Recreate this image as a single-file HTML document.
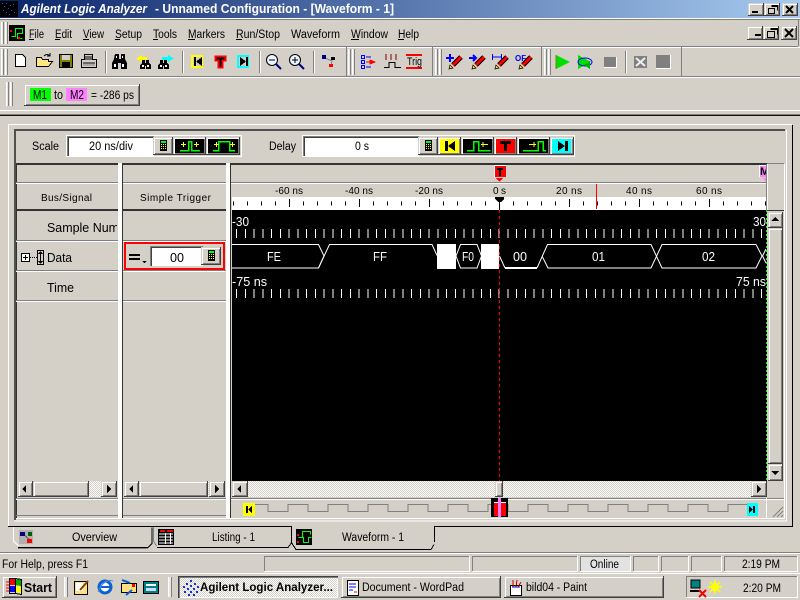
<!DOCTYPE html>
<html><head><meta charset="utf-8"><style>
html,body{margin:0;padding:0;width:800px;height:600px;overflow:hidden;background:#d4d0c8}
#p{position:absolute;left:0;top:0;width:800px;height:600px;overflow:hidden}
.r,.s,.f,.g,.g1,.b{position:absolute;box-sizing:border-box}
.b{background:#d4d0c8;box-shadow:inset -1px -1px #404040,inset 1px 1px #fff,inset -2px -2px #808080}
.r{background:#d4d0c8;box-shadow:inset -1px -1px #404040,inset 1px 1px #d4d0c8,inset 2px 2px #fff,inset -2px -2px #808080}
.s{box-shadow:inset -1px -1px #fff,inset 1px 1px #808080}
.f{background:#fff;box-shadow:inset 1px 1px #808080,inset 2px 2px #404040,inset -1px -1px #fff}
.g{width:7px;background:linear-gradient(90deg,#fff 0 1px,#e8e6e2 1px 2px,#808080 2px 3px,#d4d0c8 3px 4px,#fff 4px 5px,#e8e6e2 5px 6px,#808080 6px 7px)}
.g1{width:4px;border-left:1px solid #fff;border-right:1px solid #808080;background:#e8e6e2}
svg{position:absolute;left:0;top:0}
text{font-family:"Liberation Sans",sans-serif;font-size:11.5px;fill:#000}
.w{fill:#fff;font-size:13px}
.m{font-size:13px}
.t{font-size:10px}
</style></head><body><div id="p">
<div style="position:absolute;left:0;top:0;width:800px;height:18px;background:linear-gradient(90deg,#0a246a,#a6caf0)"></div>
<div class="r" style="left:748px;top:3px;width:16px;height:13px"></div>
<div class="r" style="left:764px;top:3px;width:16px;height:13px"></div>
<div class="r" style="left:782px;top:3px;width:16px;height:13px"></div>
<div class="r" style="left:747px;top:26px;width:16px;height:14px"></div>
<div class="r" style="left:763px;top:26px;width:16px;height:14px"></div>
<div class="r" style="left:781px;top:26px;width:16px;height:14px"></div>
<div class="g" style="left:1px;top:22px;height:22px"></div>
<div class="g" style="left:1px;top:49px;height:26px"></div>
<div class="g" style="left:348px;top:49px;height:26px"></div>
<div class="g" style="left:435px;top:49px;height:26px"></div>
<div class="g" style="left:544px;top:49px;height:26px"></div>
<div class="g" style="left:6px;top:82px;height:24px"></div>
<div class="r" style="left:24px;top:84px;width:116px;height:22px"></div>
<div style="position:absolute;left:30px;top:88px;width:21px;height:13px;background:#00ff00"></div>
<div style="position:absolute;left:66px;top:88px;width:21px;height:13px;background:#ff80ff"></div>

<div class="f" style="left:67px;top:136px;width:87px;height:20px"></div>
<div class="r" style="left:153px;top:137px;width:20px;height:18px"></div>
<div class="r" style="left:173px;top:137px;width:33px;height:18px"></div>
<div class="r" style="left:206px;top:137px;width:34px;height:18px"></div>
<div class="f" style="left:303px;top:136px;width:116px;height:20px"></div>
<div class="r" style="left:418px;top:137px;width:20px;height:18px"></div>
<div class="r" style="left:438px;top:137px;width:23px;height:18px"></div>
<div class="r" style="left:461px;top:137px;width:33px;height:18px"></div>
<div class="r" style="left:494px;top:137px;width:23px;height:18px"></div>
<div class="r" style="left:517px;top:137px;width:33px;height:18px"></div>
<div class="r" style="left:550px;top:137px;width:24px;height:18px"></div>

<div class="f" style="left:150px;top:246px;width:53px;height:20px"></div>
<div class="r" style="left:201px;top:247px;width:20px;height:18px"></div>

<div class="r" style="left:18px;top:481px;width:15px;height:16px"></div>
<div class="r" style="left:33px;top:481px;width:56px;height:16px"></div>
<div class="r" style="left:101px;top:481px;width:16px;height:16px"></div>
<div class="r" style="left:124px;top:481px;width:15px;height:16px"></div>
<div class="r" style="left:139px;top:481px;width:69px;height:16px"></div>
<div class="r" style="left:209px;top:481px;width:16px;height:16px"></div>
<div class="r" style="left:232px;top:481px;width:16px;height:16px"></div>
<div class="r" style="left:495px;top:481px;width:8px;height:16px"></div>
<div class="r" style="left:751px;top:481px;width:16px;height:16px"></div>
<div class="r" style="left:768px;top:212px;width:15px;height:16px"></div>
<div class="r" style="left:768px;top:228px;width:15px;height:236px"></div>
<div class="r" style="left:768px;top:464px;width:15px;height:17px"></div>

<div class="s" style="left:264px;top:556px;width:206px;height:16px"></div>
<div class="s" style="left:472px;top:556px;width:106px;height:16px"></div>
<div class="s" style="left:580px;top:556px;width:51px;height:16px;background:#e2e2e2"></div>
<div class="s" style="left:633px;top:556px;width:26px;height:16px"></div>
<div class="s" style="left:661px;top:556px;width:28px;height:16px"></div>
<div class="s" style="left:691px;top:556px;width:31px;height:16px"></div>
<div class="s" style="left:724px;top:556px;width:74px;height:16px"></div>

<div class="r" style="left:2px;top:576px;width:55px;height:22px"></div>
<div class="g1" style="left:64px;top:577px;height:20px"></div>
<div class="g1" style="left:168px;top:577px;height:20px"></div>
<div class="b" style="left:178px;top:576px;width:160px;height:22px;box-shadow:inset 1px 1px #404040,inset 2px 2px #808080,inset -1px -1px #fff;background:repeating-conic-gradient(#fff 0 25%,#d4d0c8 0 50%) 0 0/2px 2px"></div>
<div class="r" style="left:341px;top:576px;width:160px;height:22px"></div>
<div class="r" style="left:504px;top:576px;width:160px;height:22px"></div>
<div class="s" style="left:686px;top:576px;width:112px;height:22px"></div>

<svg width="800" height="600" viewBox="0 0 800 600" shape-rendering="crispEdges">
<defs>
<pattern id="d" width="2" height="2" patternUnits="userSpaceOnUse"><rect width="2" height="2" fill="#fff"/><rect width="1" height="1" fill="#d4d0c8"/><rect x="1" y="1" width="1" height="1" fill="#d4d0c8"/></pattern>
</defs>
<!-- title icon -->
<rect x="0" y="1" width="18" height="16" fill="#000"/>
<path d="M2 3h1v1H2zM6 3h1v1H6zM10 5h1v1h-1zM4 6h1v1H4zM13 4h1v1h-1zM8 8h1v1H8zM3 10h1v1H3zM11 10h1v1h-1zM6 12h1v1H6zM14 12h1v1h-1zM9 14h1v1H9z" fill="#2a4ae0"/>
<text x="21" y="13" font-weight="bold" font-style="italic" style="fill:#fff;font-size:13px" textLength="126" lengthAdjust="spacingAndGlyphs">Agilent Logic Analyzer</text>
<text x="155" y="13" font-weight="bold" style="fill:#fff;font-size:12.500px" textLength="239" lengthAdjust="spacingAndGlyphs">- Unnamed Configuration - [Waveform - 1]</text>
<!-- window btns -->
<path d="M752 11h6v2h-6zM755 34h6v2h-6z" fill="#000"/>
<path d="M786 6l7 7M793 6l-7 7M785 29l8 8M793 29l-8 8" stroke="#000" stroke-width="2" shape-rendering="auto"/>
<path d="M768.500 8.500h6v5h-6zM771.500 5.500h6v5M771.500 6.500h6" fill="none" stroke="#000"/>
<path d="M767.500 31.500h7v6h-7zM770.500 28.500h7v6M770.500 29.500h7" fill="none" stroke="#000"/>
<!-- chrome lines -->
<path d="M0 18.500h800" stroke="#fff"/><path d="M0 19.500h800" stroke="#808080"/>
<path d="M0 46.500h798" stroke="#808080"/><path d="M798.500 20v26" stroke="#808080"/><path d="M0 47.500h800" stroke="#fff"/>
<path d="M0 76.500h800" stroke="#808080"/><path d="M0 77.500h800" stroke="#fff"/>
<path d="M0 110.500h800" stroke="#fff"/><path d="M0 114.500h800" stroke="#808080"/><path d="M0 115.500h800" stroke="#111"/>
<path d="M346.500 47v29M432.500 47v29M541.500 47v29M681.500 47v29" stroke="#808080"/>
<path d="M105.500 51v22M182.500 51v22M259.500 51v22M313.500 51v22M625.500 51v22" stroke="#808080"/>
<path d="M106.500 51v22M183.500 51v22M260.500 51v22M314.500 51v22M626.500 51v22" stroke="#fff"/>
<!-- menu -->
<rect x="9" y="25" width="16" height="16" fill="#000"/>
<path d="M11.500 36.500h4v-8h7v5h-5v5h5" fill="none" stroke="#0f0"/>
<path d="M10 30h2v2h-2zM18 37h2v2h-2z" fill="#f00"/>
<text x="29" y="38" textLength="15" lengthAdjust="spacingAndGlyphs">File</text>
<text x="55" y="38" textLength="17" lengthAdjust="spacingAndGlyphs">Edit</text>
<text x="83" y="38" textLength="21" lengthAdjust="spacingAndGlyphs">View</text>
<text x="115" y="38" textLength="27" lengthAdjust="spacingAndGlyphs">Setup</text>
<text x="153" y="38" textLength="24" lengthAdjust="spacingAndGlyphs">Tools</text>
<text x="188" y="38" textLength="37" lengthAdjust="spacingAndGlyphs">Markers</text>
<text x="236" y="38" textLength="44" lengthAdjust="spacingAndGlyphs">Run/Stop</text>
<text x="291" y="38" textLength="49" lengthAdjust="spacingAndGlyphs">Waveform</text>
<text x="351" y="38" textLength="37" lengthAdjust="spacingAndGlyphs">Window</text>
<text x="398" y="38" textLength="21" lengthAdjust="spacingAndGlyphs">Help</text>
<path d="M29 39.500h5M55 39.500h5M83 39.500h6M115 39.500h5M153 39.500h5M188 39.500h7M236 39.500h6M351 39.500h8M398 39.500h6" stroke="#000"/>
<!-- toolbar icons -->
<path d="M15.500 54.500h7l3 3v9h-10z" fill="#fff" stroke="#000"/>
<path d="M36.500 66.500v-9h5l1 2h6v2h4l-4 5z" fill="#ffe680" stroke="#000"/><path d="M44 56q3-3 6 0M50 53v3h-3" fill="none" stroke="#000" shape-rendering="auto"/>
<rect x="59.500" y="54.500" width="13" height="13" fill="#808000" stroke="#000"/><rect x="62" y="55" width="8" height="5" fill="#d4d0c8"/><rect x="62" y="62" width="8" height="5" fill="#000"/>
<path d="M84.500 54.500h8v5h4v8h-15v-8h3z" fill="#d4d0c8" stroke="#000"/><path d="M85 57h7M85 59h7M83 63h12" stroke="#000"/><path d="M83 65h12" stroke="#808080"/>
<!-- binoculars -->
<path d="M115 54h4v5h2v-5h4v5l2 4v6h-6v-6h-3v6h-6v-6l2-4z" fill="#000"/>
<path d="M114 64h2v3h-2zM122 64h2v3h-2zM116 56h1v2h-1zM122 56h1v2h-1z" fill="#fff"/>
<path d="M135 57h5v-2l6 3.500-6 3.500v-2h-5z" transform="matrix(-1 0 0 1 282 0)" fill="#ff0"/>
<path d="M142 60h3v3h1v-3h3v3l2 2v4h-5v-3h-1v3h-5v-4l2-2z" fill="#000"/><path d="M142 65h2v2h-2zM147 65h2v2h-2z" fill="#fff"/>
<path d="M162 57h6v-2l6 3.500-6 3.500v-2h-6z" fill="#0ff"/>
<path d="M160 60h3v3h1v-3h3v3l2 2v4h-5v-3h-1v3h-5v-4l2-2z" fill="#000"/><path d="M160 65h2v2h-2zM165 65h2v2h-2z" fill="#fff"/>
<!-- K T K -->
<path d="M191 55h12v13h-12zM193 57v9h8v-9z" fill="#ff0" fill-rule="evenodd"/><path d="M194 57h2v9h-2zM196 61.500l6-4.500v9z" fill="#000"/>
<path d="M215.500 56.500h10v4h-3v7h-4v-7h-3z" fill="#000" stroke="#f00" stroke-width="2"/>
<path d="M237 55h12v13h-12zM239 57v9h8v-9z" fill="#0ff" fill-rule="evenodd"/><path d="M246 57h2v9h-2zM246 61.500l-6-4.500v9z" fill="#000"/>
<g fill="none" stroke="#000" shape-rendering="auto"><circle cx="272" cy="60" r="5.500" fill="#e8f4ff"/><path d="M269 60h6"/><circle cx="295" cy="60" r="5.500" fill="#e8f4ff"/><path d="M292 60h6M295 57v6"/></g>
<path d="M276 64l5 5M299 64l5 5" stroke="#000080" stroke-width="2" shape-rendering="auto"/>
<path d="M325 58l7 3-1 5" stroke="#808080" fill="none"/><rect x="322" y="55" width="4" height="4" fill="#000080"/><rect x="331" y="57" width="4" height="3" fill="#000"/><rect x="329" y="64" width="4" height="3" fill="#f00"/>
<g fill="none" stroke="#0000ff"><path d="M361.500 55.500h3v3h-3zM361.500 60.500h3v3h-3zM361.500 65.500h3v3h-3z"/><path d="M366 57h5M366 67h5"/></g><path d="M366 62h4v-2l5 2-5 2v-2" fill="#f00" stroke="#f00"/>
<path d="M386 54v6M391 54v6M396 54v6" stroke="#800000"/><path d="M384 67.500h5v-5h6v5h6" fill="none" stroke="#000"/>
<path d="M406 54h16v2h-16zM406 67h16v2h-16z" fill="#f00"/>
<text x="407" y="65" textLength="15" lengthAdjust="spacingAndGlyphs" style="font-size:11px">Trig</text>
<g shape-rendering="auto">
<g id="pen"><path d="M453 65l8-8" stroke="#000" stroke-width="5"/><path d="M453 65l8-8" stroke="#f00" stroke-width="3"/><path d="M449 69l1-4 3 3z" fill="#ffe000" stroke="#000" stroke-width=".7"/></g>
<path d="M476 65l8-8" stroke="#000" stroke-width="5"/><path d="M476 65l8-8" stroke="#f00" stroke-width="3"/><path d="M472 69l1-4 3 3z" fill="#ffe000" stroke="#000" stroke-width=".7"/>
<path d="M499 65l8-8" stroke="#000" stroke-width="5"/><path d="M499 65l8-8" stroke="#f00" stroke-width="3"/><path d="M495 69l1-4 3 3z" fill="#ffe000" stroke="#000" stroke-width=".7"/>
<path d="M523 65l8-8" stroke="#000" stroke-width="5"/><path d="M523 65l8-8" stroke="#f00" stroke-width="3"/><path d="M519 69l1-4 3 3z" fill="#ffe000" stroke="#000" stroke-width=".7"/>
<path d="M446 58h8M450 54v8M469 58h7M473 55l3 3-3 3" fill="none" stroke="#00f" stroke-width="2"/>
<path d="M492.500 54v6M501.500 54v6M492 57h9" fill="none" stroke="#00f"/>
</g>
<text x="515" y="61" style="font-size:8px;fill:#00f;font-weight:bold">OF</text>
<path d="M556 55l14 7-14 7z" fill="#00e000"/><path d="M556 55v14" stroke="#808000"/>
<path d="M578 55l13 7-13 7z" fill="#00e000"/><ellipse cx="585" cy="62" rx="7" ry="4" fill="none" stroke="#00f" shape-rendering="auto"/><path d="M590 61v8l-6-4z" fill="#00b000"/>
<rect x="604" y="57" width="12" height="11" fill="#808080"/><path d="M604 67.500h12M616.500 57v11" stroke="#fff"/>
<rect x="634" y="56" width="13" height="12" fill="#808080"/><path d="M636 58l9 8M645 58l-9 8" stroke="#eee" stroke-width="2" shape-rendering="auto"/>
<rect x="656" y="55" width="15" height="14" fill="#808080"/><path d="M656 68.500h15M670.500 55v14" stroke="#fff"/>
<!-- toolbar 3 -->
<text x="33" y="99" textLength="14" lengthAdjust="spacingAndGlyphs" class="m">M1</text>
<text x="54" y="99" textLength="9" lengthAdjust="spacingAndGlyphs" class="m">to</text>
<text x="70" y="99" textLength="14" lengthAdjust="spacingAndGlyphs" class="m">M2</text>
<text x="91" y="99" textLength="43" lengthAdjust="spacingAndGlyphs">= -286 ps</text>

<!-- MDI frame -->
<path d="M8 124.500h784M8.500 124v402" stroke="#fff"/>
<path d="M14 129.500h771M14 130.500h771" stroke="#505050"/><path d="M14.500 130v390M15.500 130v390" stroke="#505050"/>
<path d="M786.500 130v391H14" fill="none" stroke="#fff"/>
<path d="M784.500 164v354.500H16" fill="none" stroke="#fff"/>
<path d="M66.500 135.500h175v21h-175zM302.500 135.500h272v21h-272z" fill="none" stroke="#fff"/>
<text x="32" y="150" textLength="27" lengthAdjust="spacingAndGlyphs">Scale</text>
<text x="89" y="150" textLength="44" lengthAdjust="spacingAndGlyphs">20 ns/div</text>
<text x="269" y="150" textLength="27" lengthAdjust="spacingAndGlyphs">Delay</text>
<text x="355" y="150" textLength="14" lengthAdjust="spacingAndGlyphs">0 s</text>
<!-- calc -->
<rect x="160" y="140" width="7" height="11" fill="#000"/><rect x="161" y="141" width="5" height="2" fill="#0f0"/><path d="M161 144.500h5M161 146.500h5M161 148.500h5" stroke="#ff0" stroke-dasharray="1 1"/>
<rect x="425" y="140" width="7" height="11" fill="#000"/><rect x="426" y="141" width="5" height="2" fill="#0f0"/><path d="M426 144.500h5M426 146.500h5M426 148.500h5" stroke="#ff0" stroke-dasharray="1 1"/>
<rect x="208" y="250" width="7" height="11" fill="#000"/><rect x="209" y="251" width="5" height="2" fill="#0f0"/><path d="M209 254.500h5M209 256.500h5M209 258.500h5" stroke="#ff0" stroke-dasharray="1 1"/>
<!-- pulse buttons -->
<rect x="175" y="139" width="29" height="14" fill="#000"/><path d="M180 150.500h8.500v-9h3v9h8.500" fill="none" stroke="#0f0" stroke-width="1.500"/><path d="M181 144.500h5M183.500 142v5M194 144.500h5M196.500 142v5" stroke="#ff0"/>
<rect x="208" y="139" width="30" height="14" fill="#000"/><path d="M213 150.500h5.500v-9h11v9h5.500" fill="none" stroke="#0f0" stroke-width="1.500"/><path d="M214 144.500h5M216.500 142v5M230 144.500h5M232.500 142v5" stroke="#ff0"/>
<rect x="440" y="139" width="19" height="14" fill="#ff0"/><path d="M445 141h3v10h-3zM448 146l7-5v10z" fill="#000"/>
<rect x="463" y="139" width="29" height="14" fill="#000"/><path d="M467 150.500h6.500v-9h5v9h12" fill="none" stroke="#0f0" stroke-width="1.500"/><path d="M481 144.500h7M483 142v5" stroke="#ff0"/>
<rect x="496" y="139" width="19" height="14" fill="#f00"/><path d="M500 141h11v3h-4v7h-3v-7h-4z" fill="#000"/>
<rect x="519" y="139" width="29" height="14" fill="#000"/><path d="M523 150.500h15v-9h5v9h3" fill="none" stroke="#0f0" stroke-width="1.500"/><path d="M529 144.500h7M534 142v5" stroke="#ff0"/>
<rect x="552" y="139" width="19" height="14" fill="#0ff"/><path d="M565 141h3v10h-3zM565 146l-7-5v10z" fill="#000"/>

<!-- panels -->
<path d="M118 163h4v355h-4zM226 163h4v355h-4z" fill="#fff"/>
<path d="M16 163.500h102M123 163.500h103M231 163.500h536M16 164.500h102M123 164.500h103M231 164.500h536" stroke="#333"/><path d="M767 163.500h17" stroke="#808080"/>
<path d="M122.500 163v355M230.500 163v355" stroke="#333"/>
<path d="M16.500 163v355" stroke="#333"/>
<path d="M16 182.500h102M123 182.500h103M231 182.500h535" stroke="#808080"/><path d="M16 183.500h102M123 183.500h103M231 183.500h535" stroke="#fff"/>
<path d="M16 210.500h102M123 210.500h103M16 209.500h102M123 209.500h103" stroke="#333"/><path d="M767 210.500h17" stroke="#333"/>
<path d="M16 240.500h102M123 240.500h103M16 270.500h102M123 270.500h103M16 300.500h102M123 300.500h103M16 498.500h102M123 498.500h103M231 498.500h553" stroke="#808080"/>
<path d="M16 241.500h102M123 241.500h103M16 271.500h102M123 271.500h103M16 301.500h102M123 301.500h103M16 499.500h102M123 499.500h103M231 499.500h553" stroke="#fff"/>
<path d="M16 515.500h102M123 515.500h103" stroke="#808080"/>
<path d="M766.500 164v46" stroke="#808080"/><path d="M767.500 164v46" stroke="#fff"/>
<path d="M766.500 498v20" stroke="#fff"/>
<text x="41" y="201" textLength="51" lengthAdjust="spacing" class="t">Bus/Signal</text>
<text x="140" y="201" textLength="71" lengthAdjust="spacing" class="t">Simple Trigger</text>
<svg x="16" y="215" width="101" height="24"><text x="31" y="17" textLength="72" lengthAdjust="spacingAndGlyphs" class="m">Sample Num</text></svg>
<text x="47" y="262" textLength="25" lengthAdjust="spacingAndGlyphs" class="m">Data</text>
<text x="47" y="292" textLength="27" lengthAdjust="spacingAndGlyphs" class="m">Time</text>
<rect x="21.500" y="253.500" width="8" height="8" fill="#fff" stroke="#000"/><path d="M23 257.500h5M25.500 255v5" stroke="#000"/><path d="M30 257.500h7" stroke="#000" stroke-dasharray="1 1"/>
<rect x="37.500" y="250.500" width="6" height="14" fill="#d4d0c8" stroke="#000"/><path d="M40.500 252v11" stroke="#000"/><path d="M38 254l2.500-3 2.500 3zM38 261l2.500 3 2.500-3z" fill="#000"/>
<path d="M124.500 242.500h100v27h-100zM125.500 243.500h98v25h-98z" fill="none" stroke="#f00"/>
<path d="M129 254h11v2h-11zM129 258h11v2h-11zM142 261h5l-2.500 2z" fill="#000"/>
<text x="170" y="262" textLength="14" lengthAdjust="spacingAndGlyphs" class="m">00</text>
<!-- scroll arrows -->
<path d="M26 485v8l-4-4zM133 485v8l-4-4zM241 485v8l-4-4zM107 485v8l4-4zM215 485v8l4-4zM757 485v8l4-4zM775 217l-4 4h8zM775 475l-4-4h8z" fill="#000"/>
<rect x="89" y="481" width="12" height="16" fill="url(#d)"/><rect x="208" y="481" width="1" height="16" fill="url(#d)"/><rect x="248" y="481" width="247" height="16" fill="url(#d)"/><rect x="503" y="481" width="248" height="16" fill="url(#d)"/>
<!-- marker area -->
<rect x="494" y="165" width="12" height="12" fill="#f00"/><path d="M494 165.500h12M494.500 165v12" stroke="#fff"/><path d="M497 168h6v2h-2v6h-2v-6h-2z" fill="#000"/><path d="M496 178h7l-3.500 4z" fill="#f00"/>
<rect x="759" y="165" width="7" height="12" fill="#ff80ff"/><path d="M759 165.500h7M759.500 165v12" stroke="#fff"/>
<svg x="760" y="165" width="6" height="12"><text x="0" y="10" style="font-size:11px;font-weight:bold">M</text></svg>
<path d="M762 178h4v4z" fill="#ff80ff"/>
<!-- ruler -->
<text x="275" y="194" textLength="28" lengthAdjust="spacing" class="t">-60 ns</text>
<text x="345" y="194" textLength="28" lengthAdjust="spacing" class="t">-40 ns</text>
<text x="415" y="194" textLength="28" lengthAdjust="spacing" class="t">-20 ns</text>
<text x="493" y="194" textLength="13" lengthAdjust="spacing" class="t">0 s</text>
<text x="556" y="194" textLength="26" lengthAdjust="spacing" class="t">20 ns</text>
<text x="626" y="194" textLength="26" lengthAdjust="spacing" class="t">40 ns</text>
<text x="696" y="194" textLength="26" lengthAdjust="spacing" class="t">60 ns</text>
<rect x="232" y="197" width="534" height="13" fill="#fff"/>
<path d="M233 203.500H766" stroke="#000" stroke-width="4" stroke-dasharray="1 13"/>
<path d="M289.500 199v8M359.500 199v8M429.500 199v8M569.500 199v8M639.500 199v8M709.500 199v8M499.500 199v11" stroke="#000"/>
<path d="M495 197h9v2l-3 3h-3l-3-3z" fill="#000"/>
<path d="M596.500 184v25" stroke="#f00"/>
<!-- wave -->
<rect x="232" y="210" width="535" height="271" fill="#000"/>
<path d="M766.500 210v271" stroke="#00ff00" stroke-dasharray="2 2"/>
<path d="M236 233.500H766M236 293.500H766" stroke="#fff" stroke-width="9" stroke-dasharray="1 7.750"/>
<path d="M499.500 210V481" stroke="#f00" stroke-dasharray="3 3"/>
<text x="232" y="226" class="w" textLength="17" lengthAdjust="spacingAndGlyphs">-30</text>
<text x="753" y="226" class="w" textLength="13" lengthAdjust="spacingAndGlyphs">30</text>
<text x="232" y="286" class="w" textLength="35" lengthAdjust="spacingAndGlyphs">-75 ns</text>
<text x="736" y="286" class="w" textLength="30" lengthAdjust="spacingAndGlyphs">75 ns</text>
<text x="267" y="261" class="w" textLength="14" lengthAdjust="spacingAndGlyphs">FE</text>
<text x="373" y="261" class="w" textLength="14" lengthAdjust="spacingAndGlyphs">FF</text>
<text x="462" y="261" class="w" textLength="12" lengthAdjust="spacingAndGlyphs">F0</text>
<text x="513" y="261" class="w" textLength="14" lengthAdjust="spacingAndGlyphs">00</text>
<text x="592" y="261" class="w" textLength="13" lengthAdjust="spacingAndGlyphs">01</text>
<text x="702" y="261" class="w" textLength="13" lengthAdjust="spacingAndGlyphs">02</text>
<g fill="none" stroke="#fff" shape-rendering="geometricPrecision">
<path d="M232 244.500h86.500l5.500 11.500-5.500 12H232"/>
<path d="M318.500 268l11-23.500H432l5 11"/>
<path d="M456 256l4.500-11.500h16.500l4.500 11.500-4.500 12h-16.500z"/>
<path d="M499.500 256l5.500 12"/>
<path d="M537 268l10.500-23.500h103.500l11 23.500h94l6-12-6-11.500H662l-11 23.500H548l-6-12"/>
<path d="M762.500 256l3.500-7M762.500 256l3.500 7"/>
</g>
<path d="M505 268h32" stroke="#fff" stroke-width="2"/>
<rect x="437" y="244" width="19" height="25" fill="#fff"/><rect x="481" y="244" width="18" height="25" fill="#fff"/>
<!-- overview -->
<path d="M255 504.500h13v7h20v-7h20v7h20v-7h20v7h20v-7h20v7h20v-7h20v7h20v-7h20v7h20v-7h20v7h20v-7h20v7h20v-7h20v7h20v-7h20v7h20v-7h20v7h20v-7h20v7h20v-7h19" fill="none" stroke="#808080"/>
<rect x="243" y="503" width="12" height="13" fill="#ff0"/><path d="M246 506h2v7h-2zM248 509.500l4-3.500v7z" fill="#000"/>
<rect x="747" y="503" width="11" height="13" fill="#0ff"/><path d="M753 506h2v7h-2zM753 509.500l-4-3.500v7z" fill="#000"/>
<rect x="491" y="498" width="17" height="19" fill="#000"/><rect x="494" y="502" width="12" height="14" fill="#f00"/><path d="M494 502.500h12" stroke="#fff"/><rect x="498" y="498" width="3" height="19" fill="#ff80ff"/>
<path d="M773 517l10-10M777 517l6-6M781 517l2-2" stroke="#808080" shape-rendering="auto"/>
<!-- tabs -->
<path d="M8 526.500h283M434 526.500h359" stroke="#000"/><path d="M792.500 125v402" stroke="#000"/>
<path d="M291.500 526v16M434.500 526v16" stroke="#000"/>
<path d="M13.500 527v14l5 5" fill="none" stroke="#fff"/>
<path d="M18 547.500h130l4-4v-16" fill="none" stroke="#000"/><path d="M18 548.500h130" stroke="#808080"/>
<path d="M153.500 527v14l3 5" fill="none" stroke="#808080"/>
<path d="M157 547.500h131l3-4" fill="none" stroke="#000"/>
<path d="M291 542l5 7.500h135l3-5" fill="none" stroke="#000"/>
<rect x="19" y="530" width="14" height="14" fill="#b0b0b0"/><path d="M23 534l7 6" stroke="#555"/><rect x="20" y="532" width="5" height="4" fill="#000080"/><rect x="28" y="532" width="4" height="4" fill="#006000"/><rect x="27" y="539" width="5" height="4" fill="#f00"/>
<rect x="158" y="529" width="16" height="16" fill="#000"/><path d="M160 530h5v2h-5zM167 530h6v2h-6z" fill="#f00"/><path d="M159 534h14M159 537h14M159 540h14M159 543h14" stroke="#fff"/><path d="M165.500 533v11M170.500 533v11" stroke="#fff"/>
<rect x="296" y="529" width="16" height="16" fill="#000"/><path d="M298.500 537.500h4v-6h8v3M298.500 537.500h5v5h5v-5h3" fill="none" stroke="#0f0"/><path d="M297 534h2v2h-2zM297 541h2v2h-2z" fill="#f00"/>
<text x="72" y="541" textLength="45" lengthAdjust="spacingAndGlyphs">Overview</text>
<text x="212" y="541" textLength="43" lengthAdjust="spacingAndGlyphs">Listing - 1</text>
<text x="342" y="541" textLength="62" lengthAdjust="spacingAndGlyphs">Waveform - 1</text>
<!-- status -->
<path d="M0 552.500h800" stroke="#808080"/><path d="M0 553.500h800" stroke="#fff"/>
<text x="2" y="568" textLength="86" lengthAdjust="spacingAndGlyphs">For Help, press F1</text>
<text x="590" y="568" textLength="29" lengthAdjust="spacingAndGlyphs">Online</text>
<text x="742" y="568" textLength="38" lengthAdjust="spacingAndGlyphs">2:19 PM</text>
<path d="M0 573.500h800" stroke="#fff"/>
<!-- taskbar -->
<path d="M10 579h5v6h-5z" fill="#f00"/><path d="M15 579l6 1v6l-6-1z" fill="#0a0"/><path d="M15 586l6 1v6l-6-1z" fill="#ff0"/><path d="M10 586h5v6h-5z" fill="#00f"/><path d="M9.500 578.500h6v15h-6zM15.500 578.500l6 1v15l-6-1z" fill="none" stroke="#000"/><path d="M6 582h3M6 585h3M6 588h3M6 591h3" stroke="#f00"/>
<text x="24" y="592" font-weight="bold" textLength="28" lengthAdjust="spacingAndGlyphs" style="font-size:13px">Start</text>
<rect x="74.500" y="581.500" width="13" height="13" fill="#ffe080" stroke="#000"/><rect x="76" y="583" width="7" height="8" fill="#fff"/><path d="M80 590l8-9" stroke="#804000" stroke-width="2" shape-rendering="auto"/>
<g shape-rendering="auto"><circle cx="105" cy="587" r="6" fill="#fff" stroke="#1060d0" stroke-width="3"/><path d="M100 587h11" stroke="#1060d0" stroke-width="2"/><path d="M98 592q6 -14 15 -11" fill="none" stroke="#4090e0"/></g>
<rect x="121.500" y="583.500" width="15" height="9" fill="#ffe080" stroke="#000"/><path d="M122 580l8 3M132 590l-6 5" stroke="#0060d0" stroke-width="2" shape-rendering="auto"/><rect x="132" y="584" width="3" height="3" fill="#f00"/>
<rect x="143.500" y="581.500" width="15" height="12" fill="#008080" stroke="#000"/><rect x="146" y="584" width="10" height="2" fill="#fff"/><rect x="146" y="588" width="10" height="3" fill="#cdf"/>
<g fill="#1030e0"><path d="M190 580h2v2h-2zM186 583h2v2h-2zM183 586h2v2h-2zM194 583h2v2h-2zM190 585h2v2h-2zM197 586h2v2h-2zM187 588h2v2h-2zM193 588h2v2h-2zM184 591h2v2h-2zM190 591h2v2h-2zM196 591h2v2h-2zM188 594h2v2h-2zM193 594h2v2h-2z"/></g>
<text x="200" y="591" font-weight="bold" textLength="133" lengthAdjust="spacingAndGlyphs" style="font-size:12px">Agilent Logic Analyzer...</text>
<path d="M347.500 580.500h11v15h-11z" fill="#fff" stroke="#000"/><path d="M349 584h7M349 587h7M349 590h4" stroke="#00f"/><path d="M354 592h3" stroke="#f00"/>
<text x="362" y="591" textLength="102" lengthAdjust="spacingAndGlyphs">Document - WordPad</text>
<path d="M510.500 585.500h11v10h-11z" fill="#fff" stroke="#000"/><path d="M513 580v7M517 580l-1 7M521 582l-3 5" stroke="#c00"/><path d="M512 587h8" stroke="#00a"/>
<text x="526" y="591" textLength="61" lengthAdjust="spacingAndGlyphs">bild04 - Paint</text>
<rect x="691" y="580" width="9" height="8" fill="#008080" stroke="#000"/><path d="M690 591h11" stroke="#000" stroke-width="2"/><path d="M699 590l7 7M706 590l-7 7" stroke="#f00" stroke-width="2" shape-rendering="auto"/>
<circle cx="715" cy="587" r="4" fill="#ff0" shape-rendering="auto"/><path d="M715 580v14M708 587h14M710 582l10 10M720 582l-10 10" stroke="#ff0" stroke-width="1.500" shape-rendering="auto"/>
<text x="743" y="592" textLength="38" lengthAdjust="spacingAndGlyphs">2:20 PM</text>
</svg>
</div></body></html>
